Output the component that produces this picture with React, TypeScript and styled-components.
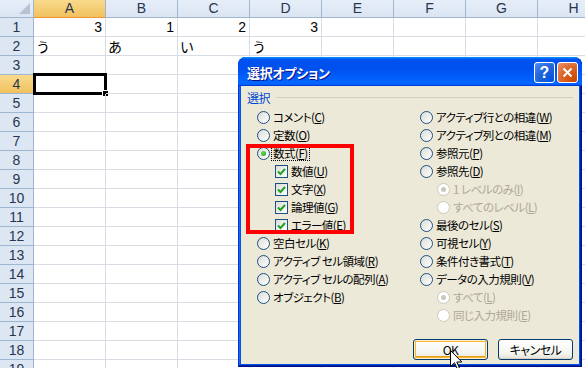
import React from "react";
import styled, { createGlobalStyle } from "styled-components";

const GlobalStyle = createGlobalStyle`
  html, body { margin: 0; padding: 0; background: #fff; }
  body {
    width: 585px;
    height: 368px;
    overflow: hidden;
    position: relative;
    font-family: "Noto Sans CJK JP", sans-serif;
  }
`;

const COLS = ["A", "B", "C", "D", "E", "F", "G", "H"];
const ROW_COUNT = 19;
const cellData: Record<string, string> = {
  A1: "3", B1: "1", C1: "2", D1: "3",
  A2: "う", B2: "あ", C2: "い", D2: "う",
};

const Sheet = styled.div`
  display: grid;
  grid-template-columns: 34px repeat(8, 72px);
  grid-template-rows: 18px;
  grid-auto-rows: 19px;
  width: 610px;
`;

const headerBg = "linear-gradient(#E6EEF8, #DBE5F3)";
const selectedBg = "linear-gradient(#F9DA8C, #F1C15F)";

const Corner = styled.div`
  position: relative;
  box-sizing: border-box;
  background: ${headerBg};
  border-right: 1px solid #9EB6CE;
  border-bottom: 1px solid #9EB6CE;
  &::after {
    content: "";
    position: absolute;
    right: 3px;
    bottom: 3px;
    border-style: solid;
    border-width: 0 0 11px 11px;
    border-color: transparent transparent #B6C3D4 transparent;
  }
`;

const ColHeader = styled.div<{ $selected?: boolean }>`
  box-sizing: border-box;
  background: ${(p) => (p.$selected ? selectedBg : headerBg)};
  border-right: 1px solid #9EB6CE;
  border-bottom: 1px solid ${(p) => (p.$selected ? "#F29436" : "#9EB6CE")};
  color: #27364F;
  font-family: "Liberation Sans", sans-serif;
  font-size: 14px;
  line-height: 17px;
  text-align: center;
`;

const RowHeader = styled.div<{ $selected?: boolean }>`
  box-sizing: border-box;
  background: ${(p) => (p.$selected ? selectedBg : "#DDE7F4")};
  border-right: 1px solid ${(p) => (p.$selected ? "#F29436" : "#9EB6CE")};
  border-bottom: 1px solid #9EB6CE;
  color: #27364F;
  font-family: "Liberation Sans", sans-serif;
  font-size: 14px;
  line-height: 18px;
  text-align: center;
  overflow: hidden;
`;

const Cell = styled.div<{ $numeric?: boolean }>`
  position: relative;
  box-sizing: border-box;
  border-right: 1px solid #D8DCE3;
  border-bottom: 1px solid #D8DCE3;
  padding: 0 3px 0 2px;
  font-size: 14px;
  line-height: 19px;
  color: #000;
  text-align: ${(p) => (p.$numeric ? "right" : "left")};
  font-family: ${(p) => (p.$numeric ? '"Liberation Sans", sans-serif' : '"Noto Sans CJK JP", sans-serif')};
`;

const ActiveFrame = styled.div`
  position: absolute;
  left: -1px;
  top: -2px;
  width: 74px;
  height: 22px;
  box-sizing: border-box;
  border: 3px solid #000;
  pointer-events: none;
  &::after {
    content: "";
    position: absolute;
    right: -4px;
    bottom: -4px;
    width: 5px;
    height: 5px;
    background: #000;
    border-left: 1px solid #fff;
    border-top: 1px solid #fff;
  }
`;

/* ---------- dialog ---------- */

const Window = styled.div`
  position: absolute;
  left: 238px;
  top: 57px;
  width: 344px;
  height: 310px;
  display: flex;
  flex-direction: column;
  background: #0055E5;
  border-radius: 8px 8px 0 0;
  box-shadow: inset -1px -1px #00138C, inset 1px 0 #0831D9, inset -2px -2px #001EA0, inset 2px 0 #166AEE;
  overflow: hidden;
`;

const TitleBar = styled.div`
  height: 29px;
  flex: none;
  display: flex;
  align-items: center;
  padding: 0 4px 0 9px;
  border-radius: 8px 8px 0 0;
  background: linear-gradient(#0997FF 0%, #0053EE 8%, #0050EE 40%, #0066FF 88%, #0066FF 93%, #005BFF 95%, #003DD7 96%, #003DD7 100%);
`;

const Title = styled.div`
  flex: 1;
  color: #fff;
  font-size: 13px;
  font-weight: bold;
  font-feature-settings: "palt";
  letter-spacing: -0.3px;
  text-shadow: 1px 1px #0F1089;
  line-height: 29px;
  padding-top: 1px;
`;

const CaptionButton = styled.div<{ $kind: "help" | "close" }>`
  width: 21px;
  height: 21px;
  box-sizing: border-box;
  margin-left: 2px;
  margin-top: 2px;
  border: 1px solid #fff;
  border-radius: 3px;
  display: flex;
  align-items: center;
  justify-content: center;
  color: #fff;
  font-family: "Liberation Sans", sans-serif;
  font-weight: bold;
  font-size: 16px;
  background: ${(p) =>
    p.$kind === "help"
      ? "radial-gradient(circle at 90% 90%, #0054E9 0%, #2263D5 55%, #4483F6 90%, #fff 130%)"
      : "radial-gradient(circle at 90% 90%, #CC4600 0%, #DC6527 55%, #E88A63 90%, #fff 130%)"};
`;

const Body = styled.div`
  flex: 1;
  position: relative;
  margin: 0 3px 3px;
  background: #ECE9D8;
  padding: 0 6px;
  display: flex;
  flex-direction: column;
  font-size: 11.5px;
  letter-spacing: -0.5px;
  font-feature-settings: "palt";
  color: #000;
`;

const GroupHeader = styled.div`
  height: 22px;
  display: flex;
  align-items: center;
  color: #0046D5;
  font-size: 12px;
  &::after {
    content: "";
    flex: 1;
    height: 1px;
    margin-left: 6px;
    margin-top: 1px;
    background: #D0D0BF;
  }
`;

const Columns = styled.div`
  display: grid;
  grid-template-columns: 163px 1fr;
  padding-left: 10px;
`;

const Column = styled.div`
  display: flex;
  flex-direction: column;
`;

const OptionRow = styled.div<{ $indent: number; $disabled?: boolean }>`
  height: 18px;
  display: flex;
  align-items: center;
  padding-left: ${(p) => p.$indent}px;
  color: ${(p) => (p.$disabled ? "#ACA899" : "#000")};
  white-space: nowrap;
`;

const Label = styled.span<{ $focus?: boolean }>`
  line-height: 14px;
  padding: 0 1px;
  margin-left: 2px;
  outline: ${(p) => (p.$focus ? "1px dotted #000" : "none")};
`;

const RadioDot = styled.span<{ $checked?: boolean; $disabled?: boolean }>`
  width: 13px;
  height: 13px;
  box-sizing: border-box;
  flex: none;
  border-radius: 50%;
  border: 1px solid ${(p) => (p.$disabled ? "#CAC8BB" : "#1C5180")};
  background: ${(p) => (p.$disabled ? "#fff" : "linear-gradient(135deg, #DCDCD7, #fff)")};
  display: flex;
  align-items: center;
  justify-content: center;
  &::after {
    content: "";
    display: ${(p) => (p.$checked ? "block" : "none")};
    width: 5px;
    height: 5px;
    border-radius: 50%;
    background: ${(p) => (p.$disabled ? "#CAC8BB" : "radial-gradient(circle at 35% 35%, #5CDB58, #21A121)")};
  }
`;

const CheckBox = styled.span`
  width: 13px;
  height: 13px;
  box-sizing: border-box;
  flex: none;
  border: 1px solid #1C5180;
  background: linear-gradient(135deg, #DCDCD7, #fff);
  display: flex;
  align-items: center;
  justify-content: center;
`;

const Highlight = styled.div`
  position: absolute;
  left: 5px;
  top: 58px;
  width: 108px;
  height: 90px;
  box-sizing: border-box;
  border: 4px solid #FF0000;
  pointer-events: none;
`;

const ButtonRow = styled.div`
  display: flex;
  justify-content: flex-end;
  gap: 10px;
  margin-top: 15px;
`;

const PushButton = styled.div<{ $default?: boolean }>`
  width: 75px;
  height: 21px;
  box-sizing: border-box;
  border: 1px solid #003C74;
  border-radius: 3px;
  background: linear-gradient(#FFFFFF, #F4F4EF 70%, #E3E0D6);
  box-shadow: ${(p) =>
    p.$default
      ? "inset 0 0 0 1px #FFF0CF, inset 0 0 0 2px #F8B330, inset 0 -3px 0 0 #E5A01A"
      : "inset 0 -1px 0 0 #D6D0C5"};
  display: flex;
  align-items: center;
  justify-content: center;
  font-size: 12px;
  line-height: 14px;
`;

const Cursor = styled.svg`
  position: absolute;
  left: 450px;
  top: 350px;
`;

type Opt = {
  text: string;
  key: string;
  kind: "radio" | "check";
  checked?: boolean;
  disabled?: boolean;
  indent?: number;
  focus?: boolean;
};

const leftOptions: Opt[] = [
  { text: "コメント", key: "C", kind: "radio" },
  { text: "定数", key: "O", kind: "radio" },
  { text: "数式", key: "F", kind: "radio", checked: true, focus: true },
  { text: "数値", key: "U", kind: "check", checked: true, indent: 18 },
  { text: "文字", key: "X", kind: "check", checked: true, indent: 18 },
  { text: "論理値", key: "G", kind: "check", checked: true, indent: 18 },
  { text: "エラー値", key: "E", kind: "check", checked: true, indent: 18 },
  { text: "空白セル", key: "K", kind: "radio" },
  { text: "アクティブ セル領域", key: "R", kind: "radio" },
  { text: "アクティブ セルの配列", key: "A", kind: "radio" },
  { text: "オブジェクト", key: "B", kind: "radio" },
];

const rightOptions: Opt[] = [
  { text: "アクティブ行との相違", key: "W", kind: "radio" },
  { text: "アクティブ列との相違", key: "M", kind: "radio" },
  { text: "参照元", key: "P", kind: "radio" },
  { text: "参照先", key: "D", kind: "radio" },
  { text: "1 レベルのみ", key: "I", kind: "radio", checked: true, disabled: true, indent: 17 },
  { text: "すべてのレベル", key: "L", kind: "radio", disabled: true, indent: 17 },
  { text: "最後のセル", key: "S", kind: "radio" },
  { text: "可視セル", key: "Y", kind: "radio" },
  { text: "条件付き書式", key: "T", kind: "radio" },
  { text: "データの入力規則", key: "V", kind: "radio" },
  { text: "すべて", key: "L", kind: "radio", checked: true, disabled: true, indent: 17 },
  { text: "同じ入力規則", key: "E", kind: "radio", disabled: true, indent: 17 },
];

function Option({ opt }: { opt: Opt }) {
  return (
    <OptionRow $indent={opt.indent ?? 0} $disabled={opt.disabled}>
      {opt.kind === "radio" ? (
        <RadioDot $checked={opt.checked} $disabled={opt.disabled} />
      ) : (
        <CheckBox>
          {opt.checked && (
            <svg width="9" height="9" viewBox="0 0 9 9">
              <path d="M1 4.5 L3.5 7 L8 2" fill="none" stroke="#21A121" strokeWidth="2" />
            </svg>
          )}
        </CheckBox>
      )}
      <Label $focus={opt.focus}>
        {opt.text}(<u>{opt.key}</u>)
      </Label>
    </OptionRow>
  );
}

function Spreadsheet() {
  const rows = [];
  for (let r = 1; r <= ROW_COUNT; r++) {
    rows.push(<RowHeader key={`h${r}`} $selected={r === 4}>{r}</RowHeader>);
    COLS.forEach((c) => {
      const id = `${c}${r}`;
      const v = cellData[id];
      rows.push(
        <Cell key={id} $numeric={v !== undefined && /^\d+$/.test(v)}>
          {v}
          {id === "A4" && <ActiveFrame />}
        </Cell>
      );
    });
  }
  return (
    <Sheet>
      <Corner />
      {COLS.map((c) => (
        <ColHeader key={c} $selected={c === "A"}>{c}</ColHeader>
      ))}
      {rows}
    </Sheet>
  );
}

function SelectDialog() {
  return (
    <Window>
      <TitleBar>
        <Title>選択オプション</Title>
        <CaptionButton $kind="help">?</CaptionButton>
        <CaptionButton $kind="close">
          <svg width="11" height="11" viewBox="0 0 11 11">
            <path d="M1.5 1.5 L9.5 9.5 M9.5 1.5 L1.5 9.5" stroke="#fff" strokeWidth="2" />
          </svg>
        </CaptionButton>
      </TitleBar>
      <Body>
        <GroupHeader>選択</GroupHeader>
        <Columns>
          <Column>
            {leftOptions.map((o) => (
              <Option key={o.text} opt={o} />
            ))}
          </Column>
          <Column>
            {rightOptions.map((o) => (
              <Option key={o.text} opt={o} />
            ))}
          </Column>
        </Columns>
        <ButtonRow>
          <PushButton $default>OK</PushButton>
          <PushButton>キャンセル</PushButton>
        </ButtonRow>
        <Highlight />
      </Body>
    </Window>
  );
}

export default function App() {
  return (
    <>
      <GlobalStyle />
      <Spreadsheet />
      <SelectDialog />
      <Cursor width="13" height="20" viewBox="0 0 13 20">
        <path d="M0.5 0.5 L0.5 16.5 L4.5 12.8 L7.2 18.8 L9.4 17.8 L6.8 12 L11.8 12 Z" fill="#fff" stroke="#000" strokeWidth="1" />
      </Cursor>
    </>
  );
}
